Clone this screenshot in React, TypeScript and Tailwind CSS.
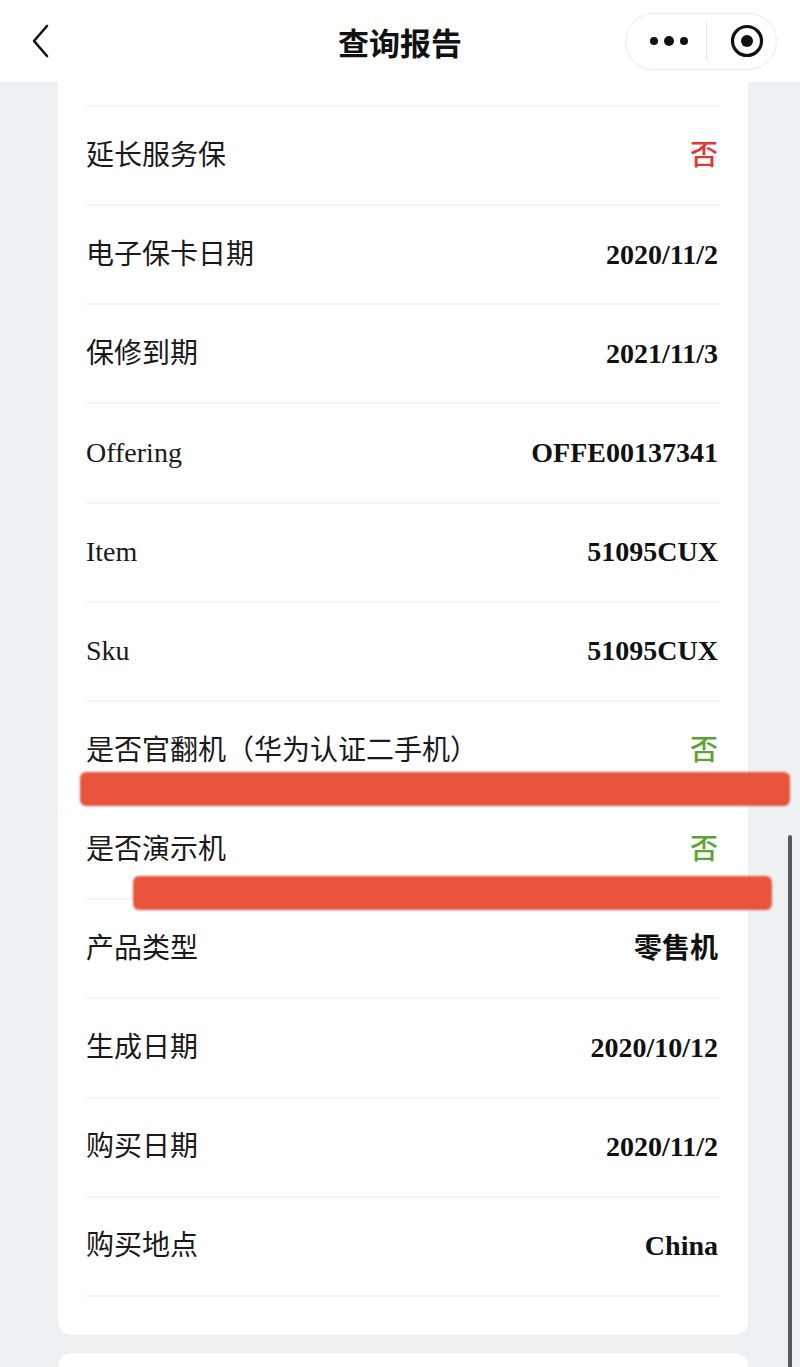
import React from 'react';

type Row = { label: string; value: string; tone?: 'red' | 'green' };

const rows: Row[] = [
  { label: '延长服务保', value: '否', tone: 'red' },
  { label: '电子保卡日期', value: '2020/11/2' },
  { label: '保修到期', value: '2021/11/3' },
  { label: 'Offering', value: 'OFFE00137341' },
  { label: 'Item', value: '51095CUX' },
  { label: 'Sku', value: '51095CUX' },
  { label: '是否官翻机（华为认证二手机）', value: '否', tone: 'green' },
  { label: '是否演示机', value: '否', tone: 'green' },
  { label: '产品类型', value: '零售机' },
  { label: '生成日期', value: '2020/10/12' },
  { label: '购买日期', value: '2020/11/2' },
  { label: '购买地点', value: 'China' },
];

const font = "font-['Liberation_Serif','Noto_Sans_CJK_SC',serif]";

function ReportRow({ row }: { row: Row }) {
  const valueClass =
    row.tone === 'red'
      ? 'text-[#e0392f] font-medium'
      : row.tone === 'green'
        ? 'text-[#5aa431] font-medium'
        : 'text-[#111] font-bold';
  return (
    <div className="h-[99.17px] border-t-2 border-[#f3f4f5] flex items-center justify-between pr-[2px]">
      <span className="text-[28px] text-[#1a1a1a] leading-none">{row.label}</span>
      <span className={`text-[28px] leading-none ${valueClass}`}>{row.value}</span>
    </div>
  );
}

export default function App() {
  return (
    <div className={`relative w-[800px] h-[1367px] overflow-hidden bg-[#eef1f4] flex flex-col ${font}`}>
      {/* Nav bar */}
      <header className="h-[82px] bg-white grid grid-cols-[1fr_auto_1fr] items-center shrink-0">
        <div className="pl-[30px] flex items-center">
          <svg width="22" height="34" viewBox="0 0 22 34" fill="none">
            <path d="M17 2 L4 17 L17 32" stroke="#111" strokeWidth="2.6" strokeLinecap="round" strokeLinejoin="round" />
          </svg>
        </div>
        <h1 className="text-[31px] font-bold text-[#111] font-['Noto_Sans_CJK_SC',sans-serif] leading-none">查询报告</h1>
        <div className="flex justify-end pr-[23px]">
          <div className="w-[152px] h-[57px] rounded-full border border-[#ededed] bg-white flex items-center">
            <div className="w-[80px] flex items-center justify-center gap-[6px] pl-[6px]">
              <span className="w-[8px] h-[8px] rounded-full bg-[#111]" />
              <span className="w-[10px] h-[10px] rounded-full bg-[#111]" />
              <span className="w-[8px] h-[8px] rounded-full bg-[#111]" />
            </div>
            <div className="w-px h-[38px] bg-[#e5e5e5]" />
            <div className="flex-1 flex items-center pl-[23px]">
              <svg width="34" height="34" viewBox="0 0 34 34" fill="none">
                <circle cx="17" cy="17" r="14.5" stroke="#111" strokeWidth="3.2" />
                <circle cx="17" cy="17" r="6" fill="#111" />
              </svg>
            </div>
          </div>
        </div>
      </header>

      {/* Card */}
      <main className="pl-[58px] pr-[52px] flex flex-col flex-1">
        <section className="bg-white rounded-b-[14px] pt-[23px] pb-[38px]">
          <div className="mx-[28px]">
            {rows.map((r, i) => (
              <ReportRow key={i} row={r} />
            ))}
            <div className="border-t-2 border-[#f3f4f5]" />
          </div>
        </section>
        <section className="mt-[18px] bg-white rounded-t-[14px] flex-1" />
      </main>

      {/* Red marker strokes over the content */}
      <div className="absolute left-[80px] top-[772px] w-[710px] h-[34px] bg-[#e8543b] rounded-[6px] blur-[1px]" />
      <div className="absolute left-[133px] top-[876px] w-[639px] h-[34px] bg-[#e8543b] rounded-[6px] blur-[1px]" />

      {/* Scroll indicator */}
      <div className="absolute left-[788px] top-[835px] w-[4px] h-[540px] rounded-full bg-[#5a5a5a]" />
    </div>
  );
}
